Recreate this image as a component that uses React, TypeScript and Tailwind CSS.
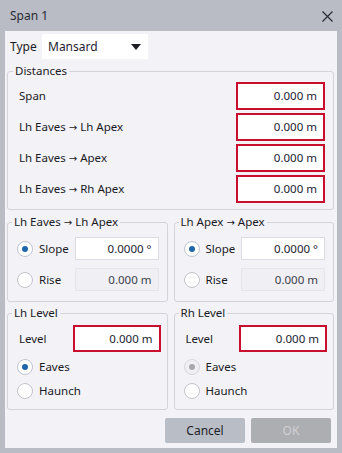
import React from "react";

function Radio({ checked, disabled }: { checked?: boolean; disabled?: boolean }) {
  return (
    <span
      className={
        "w-4 h-4 rounded-full border flex items-center justify-center shrink-0 " +
        (disabled ? "border-[#d6d6dc] bg-[#f0f0f3]" : "border-[#c3c3cb] bg-white")
      }
    >
      {checked ? (
        <span
          className={
            "w-[6px] h-[6px] rounded-full " + (disabled ? "bg-[#a8a8ae]" : "bg-[#1f67aa]")
          }
        />
      ) : null}
    </span>
  );
}

function Arrow() {
  return <span className="font-['DejaVu_Sans',sans-serif] text-[10px]">→</span>;
}

function Lbl({ a, b }: { a: string; b: string }) {
  return (
    <span>
      {a} <Arrow /> {b}
    </span>
  );
}

function RedInput({ value, w = "w-[89px]", h = "h-[28px]" }: { value: string; w?: string; h?: string }) {
  return (
    <div
      className={
        w +
        " " +
        h +
        " border-2 border-[#c8102e] bg-white flex items-center justify-end pr-[6px] text-[#1c2333]"
      }
    >
      {value}
    </div>
  );
}

function Legend({ children, ml }: { children: React.ReactNode; ml: string }) {
  return <legend className={ml + " px-[2px] leading-[16px] text-[#1b1b24]"}>{children}</legend>;
}

function SlopeGroup({ title, labelW }: { title: React.ReactNode; labelW: string }) {
  return (
    <fieldset className="flex-1 border border-[#d3d3da] rounded-[3px] pl-[9px] pr-[8px] pt-[6px] pb-[10px] flex flex-col gap-[8px]">
      <Legend ml="ml-[-5px]">{title}</Legend>
      <div className="flex items-center h-[23px]">
        <Radio checked />
        <span className={"ml-[6px] " + labelW}>Slope</span>
        <div className="flex-1 h-[23px] border border-[#dcdce2] bg-white flex items-center justify-end pr-[6px] text-[#1c2333]">
          0.0000 °
        </div>
      </div>
      <div className="flex items-center h-[23px]">
        <Radio />
        <span className={"ml-[6px] " + labelW}>Rise</span>
        <div className="flex-1 h-[23px] border border-[#e6e6ea] bg-[#f0f0f4] flex items-center justify-end pr-[6px] text-[#3a3f4c]">
          0.000 m
        </div>
      </div>
    </fieldset>
  );
}

function LevelGroup({ title, disabledEaves }: { title: string; disabledEaves?: boolean }) {
  return (
    <fieldset className="flex-1 border border-[#d3d3da] rounded-[3px] pl-[9px] pr-[6px] pt-[4px] pb-[10px] flex flex-col">
      <Legend ml="ml-[-5px]">{title}</Legend>
      <div className="flex items-center justify-between h-[27px] pl-[2px]">
        <span>Level</span>
        <RedInput value="0.000 m" w="w-[88px]" h="h-[27px]" />
      </div>
      <div className="flex items-center h-[16px] mt-[7px]">
        <Radio checked disabled={disabledEaves} />
        <span className="ml-[6px]">Eaves</span>
      </div>
      <div className="flex items-center h-[16px] mt-[8px]">
        <Radio />
        <span className="ml-[6px]">Haunch</span>
      </div>
    </fieldset>
  );
}

export default function App() {
  return (
    <div className="w-[342px] h-[453px] bg-[#b9bcc4] flex flex-col font-['Noto_Sans',sans-serif] text-[11.5px] leading-[16px] text-[#1b1b24]">
      <div className="h-[31px] shrink-0 flex items-center justify-between pl-[10px] pr-[9px]">
        <span className="text-[#2a2a33] text-[12px]">Span 1</span>
        <svg width="11" height="11" viewBox="0 0 11 11" className="mt-[1px]">
          <path d="M0.5 0.5 L10.5 10.5 M10.5 0.5 L0.5 10.5" stroke="#2a2a33" strokeWidth="1.2" fill="none" />
        </svg>
      </div>
      <div className="mx-[5px] mb-[5px] flex-1 bg-[#f2f2f7] flex flex-col px-[2px] pt-[3px]">
        <div className="flex items-center ml-[3px] h-[25px]">
          <span className="w-[32px] text-[12px]">Type</span>
          <div className="w-[106px] h-[25px] bg-white flex items-center justify-between pl-[6px] pr-[7px] text-[#1f1c33] text-[12px]">
            <span>Mansard</span>
            <svg width="10" height="6" viewBox="0 0 10 6">
              <path d="M0 0 L10 0 L5 6 Z" fill="#1f1f24" />
            </svg>
          </div>
        </div>

        <fieldset className="mt-[4px] mr-[1px] border border-[#d3d3da] rounded-[3px] pl-[11px] pr-[8px] pt-[3px] pb-[6px] flex flex-col gap-[3px]">
          <Legend ml="ml-[-6px]">Distances</Legend>
          <div className="flex items-center justify-between h-[28px]">
            <span>Span</span>
            <RedInput value="0.000 m" />
          </div>
          <div className="flex items-center justify-between h-[28px]">
            <Lbl a="Lh Eaves" b="Lh Apex" />
            <RedInput value="0.000 m" />
          </div>
          <div className="flex items-center justify-between h-[28px]">
            <Lbl a="Lh Eaves" b="Apex" />
            <RedInput value="0.000 m" />
          </div>
          <div className="flex items-center justify-between h-[28px]">
            <Lbl a="Lh Eaves" b="Rh Apex" />
            <RedInput value="0.000 m" />
          </div>
        </fieldset>

        <div className="flex gap-[6px] mt-[4px] mr-[1px]">
          <SlopeGroup title={<Lbl a="Lh Eaves" b="Lh Apex" />} labelW="w-[36px]" />
          <SlopeGroup title={<Lbl a="Lh Apex" b="Apex" />} labelW="w-[35px]" />
        </div>

        <div className="flex gap-[6px] mt-[3px] mr-[1px]">
          <LevelGroup title="Lh Level" />
          <LevelGroup title="Rh Level" disabledEaves />
        </div>

        <div className="flex justify-end gap-[6px] mt-[8px] mr-[4px]">
          <div className="w-[80px] h-[25px] rounded-[2px] bg-[#b9bdc6] flex items-center justify-center text-[#1f1f28] text-[12px]">
            Cancel
          </div>
          <div className="w-[80px] h-[25px] rounded-[2px] bg-[#adaeb2] flex items-center justify-center text-[#cfd0d3] text-[12px]">
            OK
          </div>
        </div>
      </div>
    </div>
  );
}
